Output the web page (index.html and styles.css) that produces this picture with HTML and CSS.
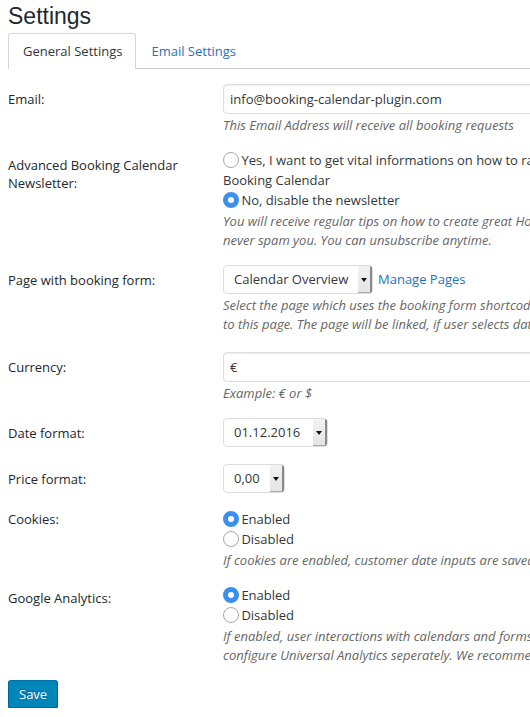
FILE: index.html
```html
<!DOCTYPE html>
<html lang="en">
<head>
<meta charset="utf-8">
<title>Settings</title>
<link rel="stylesheet" href="styles.css">
</head>
<body>
<h1 class="title">Settings</h1>
<nav class="tabs">
  <a class="tab tab-active">General Settings</a>
  <a class="tab">Email Settings</a>
</nav>
<div class="form">
  <div class="row">
    <div class="label">Email:</div>
    <div class="field">
      <div class="input">info@booking-calendar-plugin.com</div>
      <p class="desc">This Email Address will receive all booking requests</p>
    </div>
  </div>
  <div class="row">
    <div class="label label-radio">Advanced Booking Calendar<br>Newsletter:</div>
    <div class="field">
      <div class="option"><span class="radio"></span> Yes, I want to get vital informations on how to raise your bookings with Advanced<br>Booking Calendar</div>
      <div class="option"><span class="radio radio-on"></span> No, disable the newsletter</div>
      <p class="desc">You will receive regular tips on how to create great Holiday rental websites. We will<br>never spam you. You can unsubscribe anytime.</p>
    </div>
  </div>
  <div class="row">
    <div class="label">Page with booking form:</div>
    <div class="field">
      <div class="inline">
        <div class="select select-page"><span class="select-text">Calendar Overview</span><span class="select-arrow"></span></div>
        <a class="link">Manage Pages</a>
      </div>
      <p class="desc">Select the page which uses the booking form shortcode. The calendar overview will be linked<br>to this page. The page will be linked, if user selects dates in the calendar.</p>
    </div>
  </div>
  <div class="row row-after-long">
    <div class="label">Currency:</div>
    <div class="field">
      <div class="input">€</div>
      <p class="desc">Example: € or $</p>
    </div>
  </div>
  <div class="row">
    <div class="label">Date format:</div>
    <div class="field">
      <div class="select select-date"><span class="select-text">01.12.2016</span><span class="select-arrow"></span></div>
    </div>
  </div>
  <div class="row row-after-select">
    <div class="label">Price format:</div>
    <div class="field">
      <div class="select select-price"><span class="select-text">0,00</span><span class="select-arrow"></span></div>
    </div>
  </div>
  <div class="row row-cookies">
    <div class="label label-radio-tight">Cookies:</div>
    <div class="field">
      <div class="option"><span class="radio radio-on"></span> Enabled</div>
      <div class="option"><span class="radio"></span> Disabled</div>
      <p class="desc">If cookies are enabled, customer date inputs are saved in the browser for a better user experience.</p>
    </div>
  </div>
  <div class="row">
    <div class="label label-radio-mid">Google Analytics:</div>
    <div class="field">
      <div class="option"><span class="radio radio-on"></span> Enabled</div>
      <div class="option"><span class="radio"></span> Disabled</div>
      <p class="desc">If enabled, user interactions with calendars and forms will be tracked as events. You have to<br>configure Universal Analytics seperately. We recommend the Google Analytics plugin.</p>
    </div>
  </div>
</div>
<div class="actions">
  <button class="btn-primary">Save</button>
</div>
</body>
</html>
```
FILE: styles.css
```css
html {
  overflow: hidden;
  background: #fff;
}

body {
  margin: 0;
  padding: 0 8px;
  width: 900px;
  font-family: "Open Sans", "Liberation Sans", sans-serif;
  font-size: 13px;
  color: #32373c;
  background: #fff;
}

.title {
  margin: 0;
  padding-top: 2px;
  font-family: "Liberation Sans", Arial, sans-serif;
  font-weight: 400;
  font-size: 23px;
  line-height: 29px;
  color: #23282d;
}

.tabs {
  display: flex;
  align-items: flex-end;
  margin-top: 2px;
  border-bottom: 1px solid #ccc;
  height: 35px;
}

.tab {
  display: block;
  padding: 0 13px 0 14px;
  line-height: 34px;
  font-size: 13px;
  color: #1e73be;
  border: 1px solid transparent;
  border-bottom: none;
}

.tab-active {
  color: #32373c;
  background: #fff;
  border-color: #d5d5d5;
  border-radius: 3px 3px 0 0;
  margin-bottom: -1px;
  margin-right: 0;
  line-height: 35px;
}

.form {
  display: flex;
  flex-direction: column;
}

.row {
  display: grid;
  grid-template-columns: 215px 1fr;
  padding-top: 15px;
}

.row-after-long {
  padding-top: 18px;
}

.row-after-select {
  padding-top: 17px;
}

.row-cookies {
  padding-top: 16px;
}

.label {
  padding-top: 6px;
  line-height: 18px;
  color: #23282d;
}

.label-radio {
  padding-top: 6px;
}

.label-radio-tight {
  padding-top: 1px;
}

.label-radio-mid {
  padding-top: 4px;
}

.field {
  white-space: nowrap;
}

.input {
  height: 30px;
  box-sizing: border-box;
  width: 400px;
  border: 1px solid #ddd;
  border-radius: 4px;
  box-shadow: inset 0 1px 2px rgba(0, 0, 0, 0.07);
  padding: 0 6px;
  line-height: 28px;
  font-size: 13px;
  color: #32373c;
  background: #fff;
}

.desc {
  margin: 2px 0 0;
  font-style: italic;
  line-height: 19px;
  color: #666;
}

.option {
  line-height: 20px;
  color: #32373c;
  font-size: 13px;
}

.radio {
  display: inline-block;
  box-sizing: border-box;
  width: 16px;
  height: 16px;
  border: 1px solid #a9a9a9;
  border-radius: 50%;
  background: #fff;
  vertical-align: -3px;
  margin-right: -1px;
}

.radio-on {
  border: 5px solid #3b8ff0;
  background: #fff;
}

.inline {
  display: flex;
  align-items: center;
  gap: 5px;
}

.select {
  display: flex;
  height: 29px;
  box-sizing: border-box;
  border: 1px solid #ddd;
  border-radius: 4px;
  background: #fff;
  overflow: hidden;
  font-size: 13px;
  color: #32373c;
}

.select-text {
  flex: 1;
  padding-left: 10px;
  line-height: 27px;
}

.select-arrow {
  position: relative;
  width: 14px;
  background: linear-gradient(#f2f2f2, #e4e4e4);
  box-shadow: inset -2px 0 0 #8a8a8a, inset -1px -1px 0 #aaa;
}

.select-arrow::after {
  content: "";
  position: absolute;
  left: 3px;
  top: 12px;
  border-left: 3px solid transparent;
  border-right: 3px solid transparent;
  border-top: 4px solid #111;
}

.select-page {
  width: 150px;
}

.select-date {
  width: 105px;
}

.select-price {
  width: 62px;
}

.link {
  color: #1e73be;
  font-size: 13px;
  margin-top: -2px;
}

.actions {
  padding-top: 15px;
}

.btn-primary {
  height: 28px;
  padding: 0 10px 1px;
  font-family: "Open Sans", "Liberation Sans", sans-serif;
  font-size: 13px;
  color: #fff;
  background: #0085ba;
  border: 1px solid;
  border-color: #0073aa #006799 #006799;
  border-radius: 3px;
  box-shadow: 0 1px 0 #006799;
  text-shadow: 0 -1px 1px #006799;
}
```
